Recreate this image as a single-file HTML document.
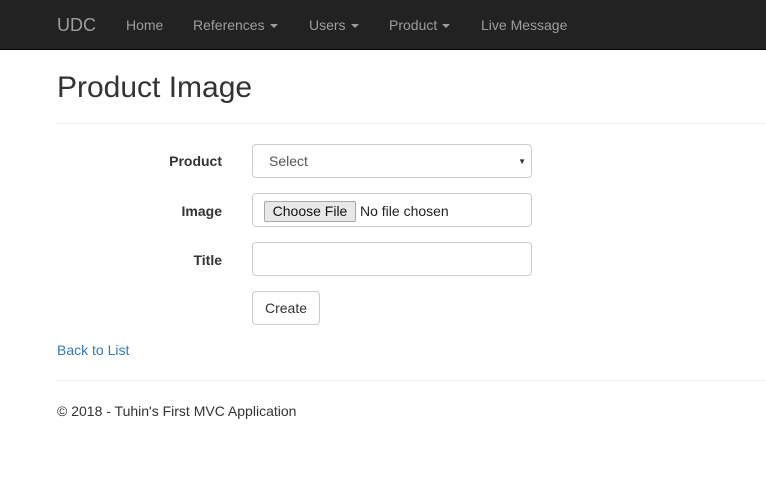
<!DOCTYPE html>
<html><head><style>
*{box-sizing:border-box;margin:0;padding:0}
body{width:766px;height:495px;background:#fff;font-family:"Liberation Sans",sans-serif;font-size:14px;color:#333;position:relative;overflow:hidden}
.nav{position:absolute;left:0;top:0;width:766px;height:50px;background:#222;border-bottom:1px solid #080808}
.nav span{position:absolute;top:17px;color:#9d9d9d;font-size:14px}
.caret{display:inline-block;width:0;height:0;border-left:4px solid transparent;border-right:4px solid transparent;border-top:4px solid #9d9d9d;vertical-align:middle;margin-left:5px}
.a{position:absolute}
.lbl{position:absolute;font-weight:bold;text-align:right;width:120px;left:102px}
.box{position:absolute;left:252px;width:280px;height:34px;border:1px solid #ccc;border-radius:4px}
hr{position:absolute;left:57px;width:709px;border:0;border-top:1px solid #eee}
</style></head><body>
<div class="nav">
<span style="left:57px;top:15px;font-size:18px">UDC</span>
<span style="left:126px">Home</span>
<span style="left:193px">References<i class="caret"></i></span>
<span style="left:309px">Users<i class="caret"></i></span>
<span style="left:389px">Product<i class="caret"></i></span>
<span style="left:481px">Live Message</span>
</div>
<div class="a" style="left:57px;top:71px;font-size:30px">Product Image</div>
<hr style="top:123px">
<div class="lbl" style="top:153px">Product</div>
<div class="box" style="top:144px"><span class="a" style="left:16px;top:8px;color:#555">Select</span><span class="a" style="right:5px;top:12px;font-size:8px;color:#333">▼</span></div>
<div class="lbl" style="top:203px">Image</div>
<div class="box" style="top:193px"><div class="a" style="left:11px;top:7px;width:92px;height:21px;background:#e8e8e8;border:1px solid #aaa;border-radius:2px;color:#111;text-align:center;line-height:19px">Choose File</div><span class="a" style="left:107px;top:9px;color:#222">No file chosen</span></div>
<div class="lbl" style="top:252px">Title</div>
<div class="box" style="top:242px"></div>
<div class="a" style="left:252px;top:291px;width:68px;height:34px;border:1px solid #ccc;border-radius:4px;text-align:center;line-height:32px">Create</div>
<div class="a" style="left:57px;top:342px;color:#337ab7">Back to List</div>
<hr style="top:380px">
<div class="a" style="left:57px;top:403px">© 2018 - Tuhin's First MVC Application</div>
</body></html>
